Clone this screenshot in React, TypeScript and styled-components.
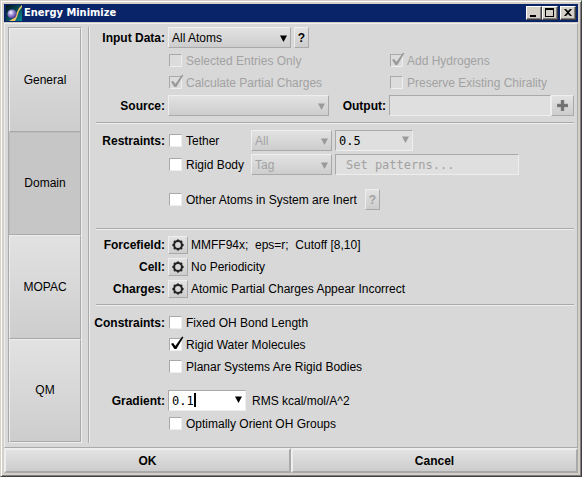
import React, { useState } from "react";
import styled, { createGlobalStyle, css } from "styled-components";

const face = "#d8d8d8";
const light = "#eeeeee";
const dark = "#a9a9a9";
const muted = "#a2a2a2";
const chrome = "#d4d0c8";
const mono = '"DejaVu Sans Mono", monospace';

const GlobalStyle = createGlobalStyle`
  *, *::before, *::after { box-sizing: border-box; }
  body { margin: 0; }
  body, button, input, select {
    font-family: "Liberation Sans", Arial, sans-serif;
    font-size: 12px;
    line-height: 14px;
    color: #000;
  }
  button, input, select { margin: 0; padding: 0; border-radius: 0; outline: none; }
`;

const raised = css`
  border: 1px solid;
  border-color: ${light} ${dark} ${dark} ${light};
  background: linear-gradient(#e2e2e2, #cdcdcd);
`;

const sunken = css`
  border: 1px solid;
  border-color: ${dark} ${light} ${light} ${dark};
`;

const Window = styled.div`
  display: flex;
  flex-direction: column;
  min-height: 100vh;
  padding: 3px;
  border: 1px solid;
  border-color: ${chrome} #404040 #404040 ${chrome};
  box-shadow: inset 1px 1px #fff, inset -1px -1px #808080;
  background: ${chrome};
`;

const TitleBar = styled.header`
  display: flex;
  align-items: center;
  height: 18px;
  padding: 0 2px;
  margin-bottom: 1px;
  background: #0a246a;
`;

const Title = styled.h1`
  flex: 1;
  margin: 0 0 0 2px;
  font: bold 11px/16px "DejaVu Sans Condensed", "DejaVu Sans", sans-serif;
  color: #fff;
`;

const Caption = styled.button<{ $apart?: boolean }>`
  display: flex;
  width: 16px;
  height: 14px;
  margin-left: ${(p) => (p.$apart ? 2 : 0)}px;
  border: 1px solid;
  border-color: #fff #404040 #404040 #fff;
  box-shadow: inset -1px -1px #808080;
  background: ${chrome};
`;

const Body = styled.main`
  display: flex;
  flex: 1;
  gap: 6px;
  padding: 3px 3px 4px 3px;
  border: 1px solid;
  border-color: ${light} ${dark} ${dark} ${light};
  background: ${face};
`;

const Nav = styled.nav`
  display: flex;
  flex-direction: column;
  width: 74px;
  ${sunken}
`;

const NavButton = styled.button<{ $active?: boolean }>`
  flex: 1;
  ${raised}
  ${(p) =>
    p.$active &&
    css`
      background: #c6c6c6;
      border-color: #bcbcbc ${dark} ${dark} #bcbcbc;
    `}
`;

const Content = styled.div`
  flex: 1;
  min-width: 0;
  padding-left: 7px;
  border-left: 1px solid ${dark};
  box-shadow: inset 1px 0 ${light};
`;

const Section = styled.section<{ $gap: number; $after?: number }>`
  display: flex;
  flex-direction: column;
  gap: ${(p) => p.$gap}px;
  padding-bottom: ${(p) => p.$after ?? 0}px;
  & + & {
    margin-top: 6px;
    padding-top: 7px;
    border-top: 1px solid ${dark};
    box-shadow: inset 0 1px ${light};
  }
`;

const Row = styled.div<{ $space?: number; $short?: boolean }>`
  display: flex;
  align-items: center;
  gap: 3px;
  min-height: ${(p) => (p.$short ? 18 : 21)}px;
  margin-top: ${(p) => p.$space ?? 0}px;
`;

const Caps = styled.label<{ $wide?: number }>`
  display: flex;
  flex: 0 0 ${(p) => p.$wide ?? 69}px;
  justify-content: flex-end;
  min-width: 0;
  font-weight: bold;
  white-space: nowrap;
`;

const Options = styled.div`
  display: grid;
  grid-template-columns: 221px 1fr;
  row-gap: 1px;
  margin-left: 72px;
`;

const CheckLabel = styled.label<{ $wide?: number; $off?: boolean }>`
  display: flex;
  align-items: center;
  gap: 4px;
  min-height: 21px;
  min-width: ${(p) => p.$wide ?? 0}px;
  padding-left: 1px;
  white-space: nowrap;
  color: ${(p) => (p.$off ? muted : "#000")};
`;

const Tick = styled.span`
  position: relative;
  display: flex;
  flex: none;
  svg {
    position: absolute;
    left: 0;
    bottom: 0;
    pointer-events: none;
  }
`;

const TickInput = styled.input`
  appearance: none;
  width: 13px;
  height: 13px;
  ${sunken}
  background: #fff;
  &:disabled { background: #dcdcdc; }
`;

const Picker = styled.span<{ $wide: number }>`
  position: relative;
  display: flex;
  flex: 0 0 ${(p) => p.$wide}px;
`;

const Stretch = styled.div`
  display: flex;
  flex: 1;
`;

const Select = styled.select`
  appearance: none;
  width: 100%;
  height: 21px;
  padding: 0 16px 0 3px;
  ${raised}
  &:disabled { color: ${muted}; opacity: 1; }
`;

const Field = styled.input<{ $indent?: number; $shade?: boolean }>`
  flex: 1;
  width: 100%;
  min-width: 0;
  height: 21px;
  padding: 0 3px 0 ${(p) => p.$indent ?? 3}px;
  font-family: ${mono};
  ${sunken}
  background: ${(p) => (p.$shade ? "#dfdfdf" : "#fff")};
  &::placeholder { color: ${muted}; opacity: 1; }
`;

const Arrow = styled.svg<{ $raise?: boolean }>`
  position: absolute;
  right: 4px;
  top: ${(p) => (p.$raise ? 6 : 8)}px;
  width: 7px;
  height: 7px;
  pointer-events: none;
`;

const Caret = styled.span`
  position: absolute;
  left: calc(3ch + 4px);
  top: 3px;
  width: 2px;
  height: 14px;
  font-family: ${mono};
  background: #000;
`;

const Small = styled.button<{ $wide: number; $short?: boolean }>`
  display: flex;
  flex: 0 0 ${(p) => p.$wide}px;
  align-items: center;
  justify-content: center;
  height: ${(p) => (p.$short ? 18 : 21)}px;
  font-weight: bold;
  ${raised}
  &:disabled { color: ${muted}; }
`;

const Fixed = styled.span<{ $wide: number }>`
  display: flex;
  flex: 0 0 ${(p) => p.$wide}px;
`;

const Unit = styled.span`
  margin-left: 3px;
`;

const Value = styled.span`
  white-space: pre;
`;

const Footer = styled.footer`
  display: flex;
`;

const FooterButton = styled.button`
  flex: 1;
  height: 25px;
  border: 2px solid;
  border-color: ${light} ${dark} ${dark} ${light};
  background: linear-gradient(#e2e2e2, #cdcdcd);
  font-weight: bold;
`;

function Triangle({ off, raise }: { off?: boolean; raise?: boolean }) {
  return (
    <Arrow $raise={raise} viewBox="0 0 7 7" aria-hidden>
      <path d="M0 .5h7L3.5 7z" fill={off ? "#9a9a9a" : "#000"} />
    </Arrow>
  );
}

function Check(props: { text: string; checked?: boolean; off?: boolean; wide?: number }) {
  const [on, setOn] = useState(!!props.checked);
  return (
    <CheckLabel $wide={props.wide} $off={props.off}>
      <Tick>
        <TickInput type="checkbox" checked={on} disabled={props.off} onChange={() => setOn(!on)} />
        {on && (
          <svg width="15" height="15" viewBox="0 0 15 15" aria-hidden>
            <path d="M2 7.8 4.2 6.9 6.3 10 13.2.5 14.4 1.2 7.4 13H5.4z" fill={props.off ? "#9a9a9a" : "#000"} />
          </svg>
        )}
      </Tick>
      {props.text}
    </CheckLabel>
  );
}

function Picked(props: { id?: string; name?: string; value: string; wide: number; off?: boolean }) {
  return (
    <Picker $wide={props.wide}>
      <Select id={props.id} aria-label={props.name} disabled={props.off}>
        <option>{props.value}</option>
      </Select>
      <Triangle off={props.off} />
    </Picker>
  );
}

const teeth = [0, 45, 90, 135, 180, 225, 270, 315];

function Gear() {
  return (
    <svg width="12" height="12" viewBox="0 0 12 12" aria-hidden>
      <circle cx="6" cy="6" r="3.9" fill="none" stroke="#222" strokeWidth="2" />
      {teeth.map((a) => (
        <path key={a} d="M4.8 2 5 .4h2L7.2 2z" fill="#222" transform={`rotate(${a} 6 6)`} />
      ))}
    </svg>
  );
}

function Setting({ name, value }: { name: string; value: string }) {
  const id = name.toLowerCase();
  return (
    <Row $short>
      <Caps htmlFor={id}>{name}:</Caps>
      <Small id={id} $wide={20} $short>
        <Gear />
      </Small>
      <Value>{value}</Value>
    </Row>
  );
}

function Logo() {
  return (
    <svg width="16" height="16" viewBox="0 0 16 16" aria-hidden>
      <defs>
        <linearGradient id="sky" x1="0" y1="0" x2="1" y2="1">
          <stop offset="0" stopColor="#04141c" />
          <stop offset=".55" stopColor="#06505c" />
          <stop offset="1" stopColor="#0a8a90" />
        </linearGradient>
        <radialGradient id="ball" cx=".38" cy=".35" r=".65">
          <stop offset="0" stopColor="#fff" />
          <stop offset=".4" stopColor="#a99be0" />
          <stop offset="1" stopColor="#4a3590" />
        </radialGradient>
      </defs>
      <path d="M0 0h16v16H0z" fill="url(#sky)" />
      <path d="M16 0 13 3 10 9 8 13 3 16h6l2-4 2-6 3-4z" fill="#f2c766" />
      <circle cx="6" cy="9" r="4.6" fill="url(#ball)" />
    </svg>
  );
}

export default function App() {
  const [tab, setTab] = useState("Domain");
  const [gradient, setGradient] = useState("0.1");
  return (
    <>
      <GlobalStyle />
      <Window>
        <TitleBar>
          <Logo />
          <Title>Energy Minimize</Title>
          <Caption aria-label="Minimize">
            <svg width="14" height="12" aria-hidden><path d="M3 8h6v2H3z" /></svg>
          </Caption>
          <Caption aria-label="Maximize">
            <svg width="14" height="12" aria-hidden><path d="M2 1h9v9H2zM3 3v6h7V3z" fillRule="evenodd" /></svg>
          </Caption>
          <Caption aria-label="Close" $apart>
            <svg width="14" height="12" aria-hidden>
              <path d="M3 2h2l2 2 2-2h2L8 5.5 11 9H9L7 7 5 9H3l3-3.5z" />
            </svg>
          </Caption>
        </TitleBar>
        <Body>
          <Nav>
            {["General", "Domain", "MOPAC", "QM"].map((n) => (
              <NavButton key={n} $active={n === tab} onClick={() => setTab(n)}>
                {n}
              </NavButton>
            ))}
          </Nav>
          <Content>
            <Section $gap={2}>
              <Row>
                <Caps htmlFor="data">Input Data:</Caps>
                <Picked id="data" value="All Atoms" wide={123} />
                <Small $wide={15}>?</Small>
              </Row>
              <Options>
                <Check text="Selected Entries Only" off />
                <Check text="Add Hydrogens" off checked />
                <Check text="Calculate Partial Charges" off checked />
                <Check text="Preserve Existing Chirality" off />
              </Options>
              <Row>
                <Caps htmlFor="source">Source:</Caps>
                <Picked id="source" value="" wide={161} off />
                <Caps htmlFor="output" $wide={54}>Output:</Caps>
                <Stretch>
                  <Field id="output" $shade disabled />
                  <Small $wide={23} disabled aria-label="Add output">
                    <svg width="11" height="11" aria-hidden>
                      <path d="M4 0h3v4h4v3H7v4H4V7H0V4h4z" fill="#707070" stroke="#8c8c8c" strokeWidth=".5" />
                    </svg>
                  </Small>
                </Stretch>
              </Row>
            </Section>
            <Section $gap={3} $after={12}>
              <Row>
                <Caps as="span">Restraints:</Caps>
                <Check text="Tether" wide={80} />
                <Picked name="Tether atoms" value="All" wide={81} off />
                <Picker $wide={78}>
                  <Field aria-label="Tether distance" defaultValue="0.5" $shade />
                  <Triangle off raise />
                </Picker>
              </Row>
              <Row>
                <Caps as="span" />
                <Check text="Rigid Body" wide={80} />
                <Picked name="Rigid body kind" value="Tag" wide={81} off />
                <Fixed $wide={184}>
                  <Field aria-label="Patterns" placeholder="Set patterns..." $indent={10} $shade disabled />
                </Fixed>
              </Row>
              <Row $space={11}>
                <Caps as="span" />
                <Check text="Other Atoms in System are Inert" wide={194} />
                <Small $wide={15} disabled>?</Small>
              </Row>
            </Section>
            <Section $gap={4}>
              <Setting name="Forcefield" value="MMFF94x;  eps=r;  Cutoff [8,10]" />
              <Setting name="Cell" value="No Periodicity" />
              <Setting name="Charges" value="Atomic Partial Charges Appear Incorrect" />
            </Section>
            <Section $gap={1}>
              <Row>
                <Caps as="span">Constraints:</Caps>
                <Check text="Fixed OH Bond Length" />
              </Row>
              <Row>
                <Caps as="span" />
                <Check text="Rigid Water Molecules" checked />
              </Row>
              <Row>
                <Caps as="span" />
                <Check text="Planar Systems Are Rigid Bodies" />
              </Row>
              <Row $space={12}>
                <Caps htmlFor="gradient">Gradient:</Caps>
                <Picker $wide={78}>
                  <Field id="gradient" value={gradient} onChange={(e) => setGradient(e.target.value)} />
                  <Caret />
                  <Triangle raise />
                </Picker>
                <Unit>RMS kcal/mol/A^2</Unit>
              </Row>
              <Row $space={1}>
                <Caps as="span" />
                <Check text="Optimally Orient OH Groups" />
              </Row>
            </Section>
          </Content>
        </Body>
        <Footer>
          <FooterButton>OK</FooterButton>
          <FooterButton>Cancel</FooterButton>
        </Footer>
      </Window>
    </>
  );
}
